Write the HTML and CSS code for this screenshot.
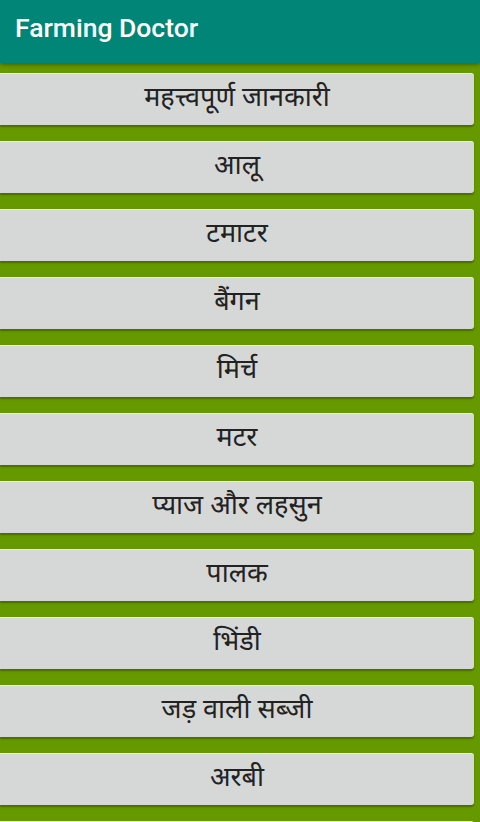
FILE: index.html
```html
<!DOCTYPE html>
<html lang="hi">
<head>
  <meta charset="UTF-8">
  <meta name="viewport" content="width=device-width, initial-scale=1.0">
  <title>Farming Doctor</title>
  <link rel="stylesheet" href="styles.css">
</head>
<body>
  <!-- App Bar -->
  <header class="app-bar">
    <h1>Farming Doctor</h1>
  </header>

  <!-- Crop List -->
  <div class="crop-list">
    <button type="button" class="crop-button">महत्त्वपूर्ण जानकारी</button>
    <button type="button" class="crop-button">आलू</button>
    <button type="button" class="crop-button">टमाटर</button>
    <button type="button" class="crop-button">बैंगन</button>
    <button type="button" class="crop-button">मिर्च</button>
    <button type="button" class="crop-button">मटर</button>
    <button type="button" class="crop-button">प्याज और लहसुन</button>
    <button type="button" class="crop-button">पालक</button>
    <button type="button" class="crop-button">भिंडी</button>
    <button type="button" class="crop-button">जड़ वाली सब्जी</button>
    <button type="button" class="crop-button">अरबी</button>
    <!-- next item only peeks in at the bottom edge -->
    <button type="button" class="crop-button"></button>
  </div>
</body>
</html>
```

FILE: styles.css
```css
body {
  margin: 0;
  padding: 0;
  background-color: #669900;
  font-family: Roboto, "Noto Sans", sans-serif;
  overflow: hidden;
}

.app-bar {
  height: 63px;
  background-color: #008577;
  box-shadow: 0 2px 4px rgba(0, 0, 0, 0.35);
  display: flex;
  align-items: center;
  padding: 0 15px;
  position: relative;
}

.app-bar h1 {
  margin: 0;
  margin-top: -8px;
  color: #fff;
  font-size: 26.5px;
  font-weight: 500;
}

.crop-list {
  display: flex;
  flex-direction: column;
  gap: 16px;
  padding-top: 10px;
}

.crop-button {
  width: 474px;
  height: 52px;
  margin: 0;
  padding: 0;
  border: none;
  border-top: 1px solid #e8f0d8;
  border-radius: 0 3px 3px 0;
  background-color: #d6d7d7;
  box-shadow: 0 2px 2px rgba(0, 0, 0, 0.3);
  color: #222;
  font-family: "Noto Sans Devanagari", "Noto Sans", "Lohit Devanagari", sans-serif;
  font-size: 27px;
  font-weight: 400;
  text-align: center;
}
```
